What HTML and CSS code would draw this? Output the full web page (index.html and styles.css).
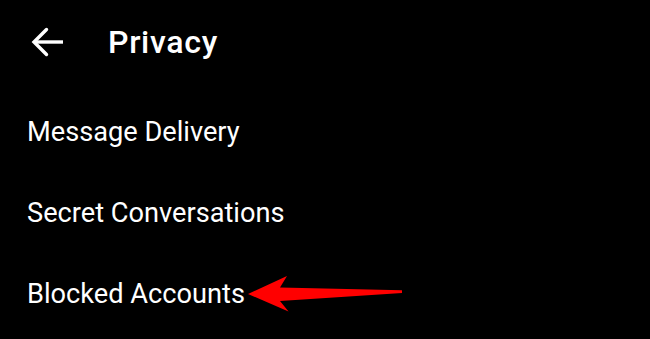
FILE: index.html
```html
<!DOCTYPE html>
<html>
<head>
<meta charset="utf-8">
<link rel="stylesheet" href="styles.css">
</head>
<body>
<div class="screen">
  <header class="header">
    <svg class="back" width="36" height="32" viewBox="0 0 36 32">
      <line x1="4" y1="16" x2="33" y2="16" stroke="#fff" stroke-width="3.4"/>
      <polyline points="16.5,3.5 4,16 16.5,28.5" fill="none" stroke="#fff" stroke-width="3.4" stroke-linecap="round" stroke-linejoin="miter"/>
    </svg>
    <h1 class="title">Privacy</h1>
  </header>
  <ul class="list">
    <li class="item">Message Delivery</li>
    <li class="item">Secret Conversations</li>
    <li class="item">Blocked Accounts</li>
  </ul>
  <svg class="annotation" width="650" height="339" viewBox="0 0 650 339">
    <polygon points="248,294 287,276 280,287.5 402,290.3 402,293 280,301 288.5,311.5" fill="#ff0000"/>
  </svg>
</div>
</body>
</html>
```
FILE: styles.css
```css
html, body {
  margin: 0;
  padding: 0;
  background: #000;
}
.screen {
  position: relative;
  width: 650px;
  height: 339px;
  overflow: hidden;
  background: #000;
  color: #fff;
  font-family: Roboto, "Noto Sans", sans-serif;
}
.header {
  display: flex;
  align-items: center;
  height: 84px;
}
.back {
  display: block;
  margin-left: 30px;
  flex: none;
}
.title {
  margin: 0 0 0 42px;
  font-family: "Roboto Medium", Roboto, "Noto Sans", sans-serif;
  font-size: 32px;
  font-weight: 500;
  letter-spacing: 0.7px;
  line-height: 84px;
}
.list {
  list-style: none;
  margin: 8px 0 0 0;
  padding: 0;
}
.item {
  height: 81px;
  line-height: 81px;
  padding-left: 27px;
  font-size: 27.2px;
  font-weight: 400;
}
.annotation {
  position: absolute;
  top: 0;
  left: 0;
  pointer-events: none;
}
```
